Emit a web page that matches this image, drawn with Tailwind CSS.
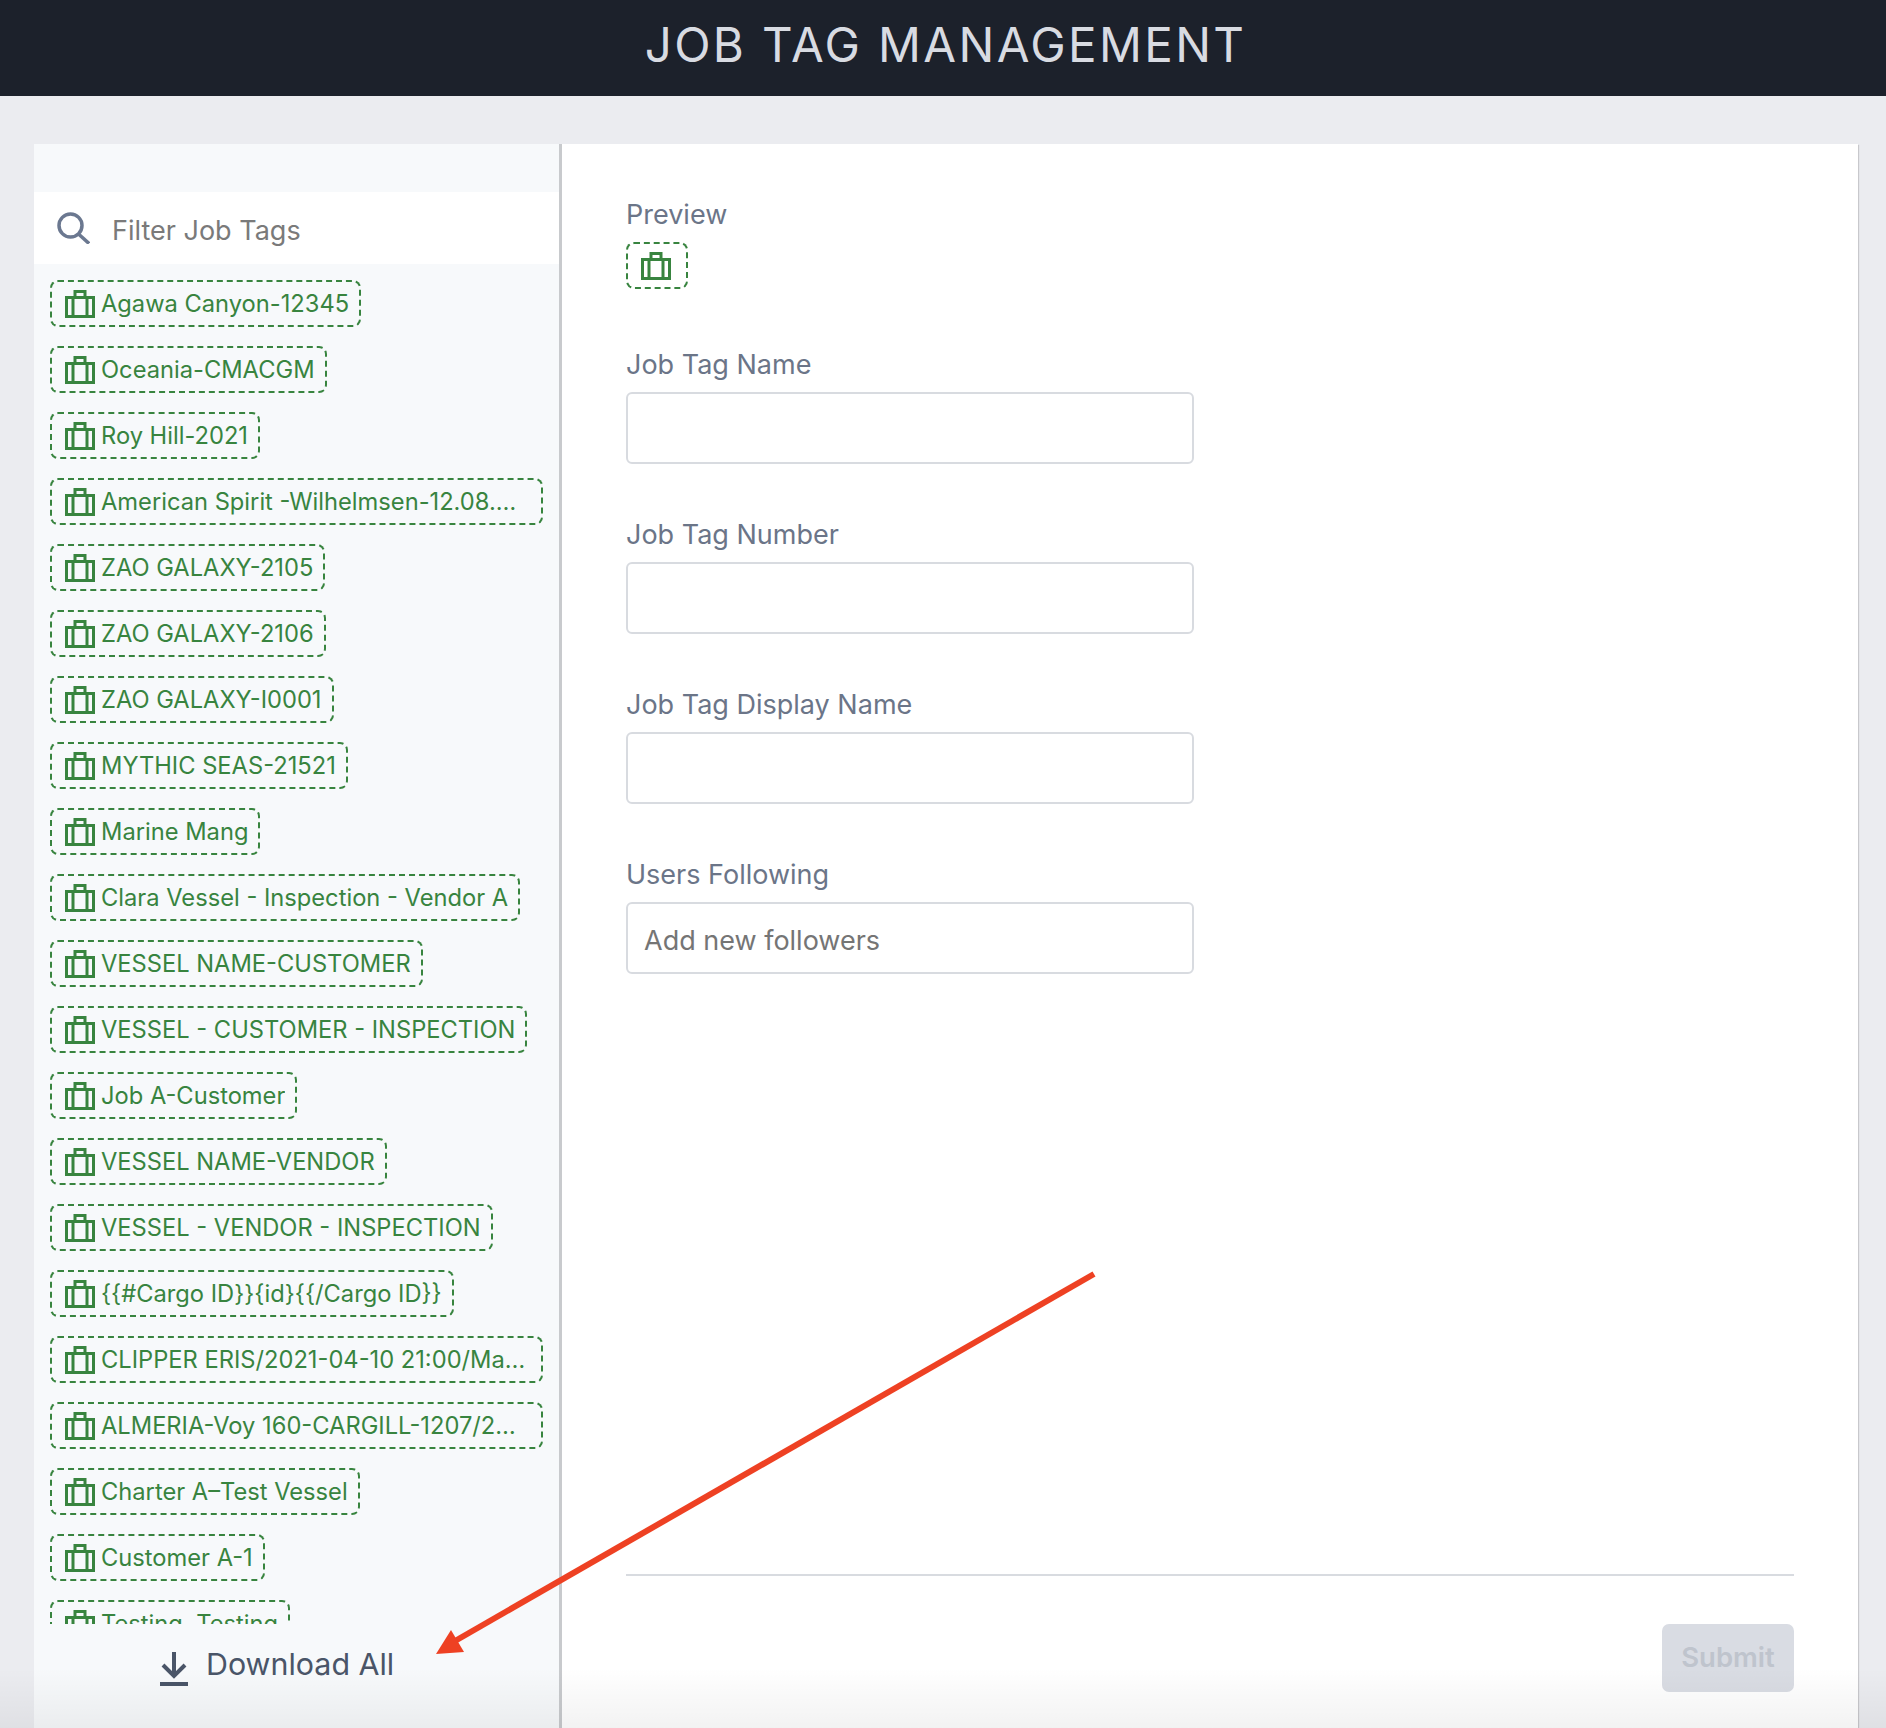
<!DOCTYPE html>
<html lang="en">
<head>
  <meta charset="UTF-8" />
  <title>Job Tag Management</title>
  <script src="https://cdn.jsdelivr.net/npm/@tailwindcss/browser@4"></script>
</head>
<body class="relative h-[1728px] overflow-hidden bg-[#ebecf0] font-['Inter',sans-serif]">
  <header class="flex h-24 items-center justify-center bg-[#1c212b]">
    <h1 class="pb-[6px] pl-[5px] text-[47.5px] tracking-[0.05em] text-[#d8dbe2]">JOB TAG MANAGEMENT</h1>
  </header>

  <main class="mx-[34px] mt-12 flex h-[1584px] w-[1824px] bg-white shadow-[1px_1px_1px_rgba(0,0,0,0.15)]">
    <aside class="flex w-[528px] shrink-0 flex-col border-r-[3px] border-[#c8cacd] bg-[#f7f9fb] pt-12">
      <div class="flex h-[72px] shrink-0 items-center gap-[22px] bg-white pl-[23px]">
        <svg width="33" height="32" viewBox="0 0 33 32" fill="none" stroke="#6b7890" stroke-width="3.5"><circle cx="13.5" cy="13.5" r="11.5"/><path d="M21.5 22 L32 31.5"/></svg>
        <input class="mt-[7px] w-[400px] bg-transparent text-[27px] outline-none placeholder:text-[#7a7a7a]" placeholder="Filter Job Tags" />
      </div>
      <div id="tags" class="flex h-[1360px] flex-col items-start gap-[19px] overflow-hidden pt-4 pl-[16px]"></div>
      <div class="flex items-center pl-[126px] pt-[22px] text-[30.4px] text-[#4a5568]">
        <svg width="28" height="34" viewBox="0 0 28 34" fill="none" stroke="#4a5568" stroke-width="4"><path d="M14 0 V23 M3 13 L14 24 L25 13"/><path d="M0 32 H28" stroke-width="4"/></svg>
        <span class="mb-[9px] ml-[18px] leading-[36px]">Download All</span>
      </div>
    </aside>

    <section class="flex flex-1 flex-col pl-[64px] pr-[64px] text-[27px] text-[#6b7588]">
      <div class="pt-[54px] leading-[34px]">Preview</div>
      <div class="mt-[10px] flex h-[47px] w-[62px] items-center rounded-[8px] border-2 border-dashed border-[#38843f] pl-[13px]">
        <svg width="30" height="28" viewBox="0 0 30 28" fill="none" stroke="#38843f" stroke-width="3"><path d="M1.5 7.5 H28.5 V26.5 H1.5 Z M10 7.5 V1.5 H20 V7.5 M8 7.5 V26.5 M22 7.5 V26.5"/></svg>
      </div>
      <label class="mt-[59px] block leading-[34px]">Job Tag Name</label>
      <input class="mt-[10px] h-[72px] w-[568px] rounded-[6px] border-2 border-[#d8dbe0] bg-white px-4 outline-none" />
      <label class="mt-[54px] block leading-[34px]">Job Tag Number</label>
      <input class="mt-[10px] h-[72px] w-[568px] rounded-[6px] border-2 border-[#d8dbe0] bg-white px-4 outline-none" />
      <label class="mt-[54px] block leading-[34px]">Job Tag Display Name</label>
      <input class="mt-[10px] h-[72px] w-[568px] rounded-[6px] border-2 border-[#d8dbe0] bg-white px-4 outline-none" />
      <label class="mt-[54px] block leading-[34px]">Users Following</label>
      <input class="mt-[10px] h-[72px] w-[568px] rounded-[6px] border-2 border-[#d8dbe0] bg-white px-4 pt-[4px] text-[#333] outline-none placeholder:text-[#757575]" placeholder="Add new followers" />
      <div class="mt-auto border-t-2 border-[#d8dbe0]"></div>
      <div class="mb-[36px] mt-[48px] flex justify-end">
        <button disabled class="h-[68px] w-[132px] rounded-[7px] bg-[#d9dce3] text-[27.5px] font-semibold text-[#bfc4cd]">Submit</button>
      </div>
    </section>
  </main>

  <!-- page fades out at the bottom of the capture -->
  <div class="pointer-events-none absolute inset-x-0 bottom-0 h-[60px] bg-gradient-to-b from-transparent to-black/5"></div>

  <!-- annotation arrow -->
  <svg class="pointer-events-none absolute left-0 top-0" width="1886" height="1728" fill="none">
    <path d="M1094 1274 L455 1641" stroke="#ee4123" stroke-width="6"/>
    <path d="M436 1654 L451 1630 L464 1652 Z" fill="#ee4123"/>
  </svg>

  <script>
    const jobTags = [
      'Agawa Canyon-12345','Oceania-CMACGM','Roy Hill-2021','American Spirit -Wilhelmsen-12.08.2021',
      'ZAO GALAXY-2105','ZAO GALAXY-2106','ZAO GALAXY-I0001','MYTHIC SEAS-21521','Marine Mang',
      'Clara Vessel - Inspection - Vendor A','VESSEL NAME-CUSTOMER','VESSEL - CUSTOMER - INSPECTION',
      'Job A-Customer','VESSEL NAME-VENDOR','VESSEL - VENDOR - INSPECTION','{{#Cargo ID}}{id}{{/Cargo ID}}',
      'CLIPPER ERIS/2021-04-10 21:00/Marine','ALMERIA-Voy 160-CARGILL-1207/2021-Charter',
      'Charter A–Test Vessel','Customer A-1','Testing, Testing'
    ];
    // these names get cut off and keep a bit more room after the ellipsis
    const cutOff = [3, 16, 17];
    const list = document.getElementById('tags');
    jobTags.forEach((name, idx) => {
      const tag = document.createElement('div');
      const padRight = cutOff.includes(idx) ? 'pr-[13px]' : 'pr-[10px]';
      tag.className = 'flex h-[47px] shrink-0 items-center rounded-[8px] border-2 border-dashed border-[#38843f] pl-[13px] text-[23.7px] text-[#38843f] ' + padRight;
      tag.innerHTML = '<svg class="shrink-0" width="30" height="28" viewBox="0 0 30 28" fill="none" stroke="#38843f" stroke-width="3"><path d="M1.5 7.5 H28.5 V26.5 H1.5 Z M10 7.5 V1.5 H20 V7.5 M8 7.5 V26.5 M22 7.5 V26.5"/></svg>';
      const label = document.createElement('span');
      label.className = 'ml-[6px] max-w-[427px] truncate';
      label.textContent = name;
      tag.appendChild(label);
      list.appendChild(tag);
    });
  </script>
</body>
</html>
